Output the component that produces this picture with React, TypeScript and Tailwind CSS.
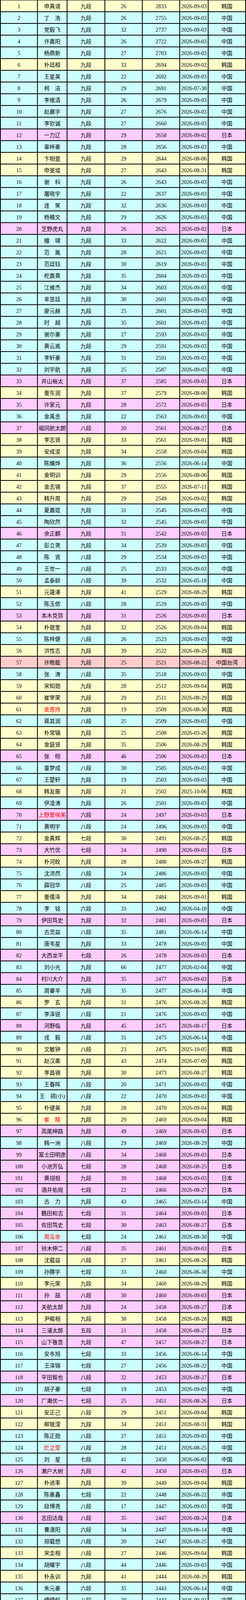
const RAW = `
1|申真谞|九段|26|2833|2026-09-03|韩国
2|丁　浩|九段|26|2755|2026-09-03|中国
3|党毅飞|九段|32|2737|2026-09-03|中国
4|许嘉阳|九段|26|2722|2026-09-03|中国
5|杨鼎新|九段|27|2703|2026-09-03|中国
6|朴廷桓|九段|33|2694|2026-09-02|韩国
7|王星昊|九段|22|2692|2026-09-03|中国
8|柯　洁|九段|29|2691|2026-07-30|中国
9|李维清|九段|26|2679|2026-09-03|中国
10|赵晨宇|九段|27|2676|2026-09-03|中国
11|李钦诚|九段|27|2660|2026-09-03|中国
12|一力辽|九段|29|2658|2026-09-02|日本
13|辜梓豪|九段|28|2656|2026-09-03|中国
14|卞相壹|九段|29|2644|2026-08-06|韩国
15|申旻埈|九段|27|2643|2026-08-31|韩国
16|谢　科|九段|26|2643|2026-09-03|中国
17|屠晓宇|九段|22|2637|2026-09-03|中国
18|连　笑|九段|32|2636|2026-09-03|中国
19|杨楷文|九段|29|2626|2026-09-03|中国
20|芝野虎丸|九段|26|2625|2026-09-02|日本
21|檀　啸|九段|33|2622|2026-09-03|中国
22|范　胤|九段|28|2621|2026-09-03|中国
23|范廷钰|九段|30|2619|2026-09-03|中国
24|柁嘉熹|九段|35|2604|2026-09-03|中国
25|江维杰|九段|34|2603|2026-09-03|中国
26|芈昱廷|九段|30|2601|2026-09-03|中国
27|廖元赫|九段|25|2601|2026-09-03|中国
28|时　越|九段|35|2601|2026-09-03|中国
29|谢尔豪|九段|27|2593|2026-09-03|中国
30|黄云嵩|九段|29|2591|2026-09-03|中国
31|李轩豪|九段|31|2591|2026-09-03|中国
32|刘宇航|九段|25|2587|2026-09-03|中国
33|井山裕太|九段|37|2585|2026-09-03|日本
34|姜东润|九段|37|2579|2026-08-06|韩国
35|许家元|九段|28|2572|2026-09-03|日本
36|金禹丞|九段|22|2563|2026-09-03|中国
37|福冈航太朗|八段|20|2561|2026-08-27|日本
38|李志贤|九段|33|2561|2026-09-01|韩国
39|安成浚|九段|34|2558|2026-09-04|韩国
40|陈耀烨|九段|36|2556|2026-06-14|中国
41|金明训|九段|29|2556|2026-08-06|韩国
42|金志锡|九段|37|2555|2026-07-11|韩国
43|韩升周|九段|29|2549|2026-09-02|韩国
44|夏晨琨|九段|31|2545|2026-09-03|中国
45|陶欣然|九段|32|2545|2026-09-03|中国
46|余正麒|九段|31|2542|2026-09-03|日本
47|彭立尧|九段|34|2539|2026-09-03|中国
48|陈　贤|八段|29|2534|2026-09-03|中国
49|王世一|八段|25|2533|2026-09-03|中国
50|孟泰龄|八段|39|2532|2026-05-18|中国
51|元晟溱|九段|41|2529|2026-08-29|韩国
52|陈玉侬|八段|28|2529|2026-09-03|中国
53|本木克弥|九段|31|2526|2026-09-03|日本
54|朴珉奎|九段|32|2526|2026-09-04|韩国
55|陈梓健|八段|26|2523|2026-09-03|中国
56|洪性志|九段|39|2522|2026-08-29|韩国
57|许皓鋐|九段|25|2521|2026-08-22|中国台湾
58|张　涛|八段|35|2518|2026-09-03|中国
59|宋知勋|九段|28|2512|2026-09-04|韩国
60|崔宰荣|九段|29|2511|2026-08-29|韩国
61|*金恩持|九段|19|2509|2026-08-30|韩国
62|蒋其润|八段|25|2509|2026-09-03|中国
63|朴常镇|九段|25|2508|2026-03-26|韩国
64|金庭贤|九段|35|2506|2026-08-29|韩国
65|张　栩|九段|46|2506|2026-09-03|日本
66|童梦成|八段|30|2505|2026-09-03|中国
67|王楚轩|九段|19|2503|2026-09-03|中国
68|韩友赈|九段|21|2502|2025-10-06|韩国
69|伊凌涛|九段|26|2501|2026-09-03|中国
70|*上野爱咲美|六段|24|2497|2026-09-03|日本
71|黄明宇|八段|24|2496|2026-09-03|中国
72|金真辉|七段|30|2491|2026-08-25|韩国
73|大竹优|七段|24|2490|2026-09-03|日本
74|朴河旼|九段|28|2488|2026-08-27|韩国
75|沈沛然|八段|24|2486|2026-09-03|中国
76|薛冠华|八段|25|2485|2026-09-03|中国
77|姜儒泽|九段|34|2484|2026-09-01|韩国
78|李　铭|六段|33|2482|2026-04-10|中国
79|伊田笃史|九段|32|2481|2026-09-03|日本
80|古灵益|八段|35|2481|2026-06-14|中国
81|唐韦星|九段|33|2478|2026-09-03|中国
82|大西龙平|七段|26|2478|2026-09-03|日本
83|刘小光|九段|66|2477|2026-02-04|中国
84|村川大介|九段|35|2477|2026-09-03|日本
85|周睿羊|九段|35|2477|2026-06-14|中国
86|罗　玄|九段|31|2476|2026-08-26|韩国
87|李泽锐|八段|21|2476|2026-09-03|中国
88|河野临|九段|45|2475|2026-08-17|日本
89|戎　毅|八段|31|2475|2026-06-14|中国
90|文敏钟|八段|23|2475|2025-10-05|韩国
91|赵汉乘|九段|43|2474|2026-07-09|韩国
92|李昌锡|九段|30|2473|2026-08-27|韩国
93|王春晖|八段|20|2471|2026-09-03|中国
94|王　硕(小)|八段|22|2470|2026-09-03|中国
95|朴键昊|九段|28|2470|2026-09-04|韩国
96|*崔　精|九段|29|2469|2026-09-04|韩国
97|高尾绅路|九段|49|2469|2026-09-03|日本
98|韩一洲|八段|29|2469|2026-08-29|中国
99|富士田明彦|八段|34|2468|2026-09-03|日本
100|小池芳弘|七段|28|2468|2026-08-25|日本
101|黄翊祖|九段|39|2468|2026-09-03|日本
102|酒井佑规|七段|22|2466|2026-08-27|日本
103|古　力|九段|43|2465|2026-03-14|中国
104|鶴田和志|七段|31|2464|2026-09-03|日本
105|佐田笃史|七段|30|2463|2026-08-27|日本
106|*周泓余|七段|24|2461|2026-08-30|中国
107|铃木伸二|八段|35|2461|2026-09-03|日本
108|沈载益|八段|27|2461|2026-08-26|韩国
109|孙腾宇|七段|33|2460|2026-06-30|中国
110|李元荣|九段|34|2460|2026-08-29|韩国
111|孙　喆|八段|30|2460|2026-09-03|日本
112|关航太郎|九段|24|2458|2026-08-27|日本
113|尹畯相|九段|38|2458|2026-08-28|韩国
114|三浦太郎|五段|21|2458|2026-08-27|日本
115|山下敬吾|九段|47|2457|2026-08-27|日本
116|安冬旭|七段|33|2456|2026-06-14|中国
117|王泽锦|七段|27|2456|2026-08-22|中国
118|平田智也|八段|32|2453|2026-08-27|日本
119|胡子豪|七段|19|2453|2026-09-03|中国
120|广濑优一|七段|25|2451|2026-08-26|日本
121|安正己|八段|29|2451|2026-09-04|韩国
122|柳珉滢|九段|34|2451|2026-08-31|韩国
123|陈正勋|八段|27|2451|2026-09-03|中国
124|*於之莹|八段|28|2451|2026-08-25|中国
125|刘　星|七段|41|2450|2026-06-02|中国
126|濑户大树|九段|42|2450|2026-09-03|日本
127|朴进率|九段|39|2449|2026-09-04|韩国
128|陈豪鑫|七段|22|2448|2026-08-22|中国
129|段博尧|八段|17|2447|2026-09-03|中国
130|志田达哉|八段|35|2447|2026-08-24|日本
131|曹潇阳|六段|34|2447|2026-06-14|中国
132|郑载想|八段|20|2447|2026-08-25|中国
133|宋圭相|八段|27|2446|2026-09-04|韩国
134|胡耀宇|八段|44|2446|2026-09-03|中国
135|朴永训|九段|41|2444|2026-08-29|韩国
136|朱元豪|六段|35|2443|2026-06-14|中国
137|傅健恒|八段|20|2443|2026-09-03|中国
138|安国铉|九段|34|2443|2026-08-25|韩国
139|周贺玺|七段|33|2442|2026-04-12|中国
140|渡边宽大|四段|23|2441|2026-09-03|日本
141|钟文靖|六段|35|2441|2026-04-09|中国
142|村本涉|五段|28|2439|2026-08-24|日本
143|邱禹然|七段|17|2438|2026-08-22|中国
144|白洪淅|九段|40|2437|2026-07-28|韩国
145|郑晳俊|六段|30|2437|2026-08-29|韩国
146|罗洗河|九段|48|2437|2025-10-25|中国
147|邬光亚|七段|36|2436|2026-08-29|中国
148|何　旸|八段|25|2436|2026-08-15|中国
149|叶长欣|八段|19|2436|2026-09-03|中国
150|横塚力|八段|31|2436|2026-09-03|日本
151|许荣珞|六段|30|2435|2026-08-29|韩国
152|谷口徹|六段|30|2435|2026-09-02|日本
153|俞　斌|九段|59|2433|2026-02-06|中国
154|*藤泽里菜|七段|27|2432|2026-09-03|日本
155|金昇珍|八段|20|2430|2026-09-04|韩国
156|田中康湧|五段|25|2430|2026-08-19|日本
157|六浦雄太|八段|27|2429|2026-09-03|日本
158|韩尚勋|九段|38|2428|2026-04-26|韩国
159|陈一纯|七段|24|2427|2026-09-03|中国
160|国宇征|六段|33|2427|2026-06-14|中国
161|林汉杰|八段|42|2426|2026-09-03|日本
162|汪希如|七段|28|2425|2026-08-27|中国
163|姜昇旼|九段|31|2423|2026-09-04|韩国
164|彦坂直人|九段|64|2422|2026-09-03|日本
165|陈　浩|六段|32|2421|2026-06-14|中国
166|李昊潼|八段|22|2420|2026-09-03|中国
167|马靖原|七段|17|2420|2026-08-30|中国
168|廖行文|六段|31|2419|2026-06-14|中国
169|严　欢|八段|35|2419|2026-06-14|中国
170|羽根直树|九段|50|2419|2026-09-03|日本
171|何语涵|七段|26|2419|2026-09-03|中国
172|蔡　竞|六段|33|2418|2026-04-27|中国
173|王昊洋|七段|36|2418|2026-05-09|中国
174|李成森|七段|26|2416|2026-09-03|中国
175|*陆敏全|七段|27|2413|2026-08-28|中国
176|辻笃仁|五段|24|2413|2026-09-02|日本
177|吴柏毅|六段|30|2413|2026-09-03|日本
178|结城聪|九段|54|2410|2026-09-03|日本
179|李宰成|六段|27|2409|2026-09-04|韩国
180|大桥成哉|八段|36|2409|2026-08-27|日本
181|马逸超|七段|28|2409|2026-08-28|中国
182|周子弈|六段|18|2408|2026-09-03|中国
183|洪爽義|五段|40|2408|2026-09-03|日本
184|阿部良希|五段|30|2408|2026-08-26|日本
185|胡钰函|六段|29|2405|2026-06-30|中国
186|张　强|七段|34|2405|2026-08-28|中国
187|高嶋湧吾|五段|29|2405|2026-07-29|日本
188|赵治勋|九段|70|2403|2026-08-17|日本
189|许一笛|七段|19|2402|2026-09-03|中国
190|清成哲也|九段|64|2401|2026-09-02|日本
191|黄静远|六段|26|2401|2026-06-14|中国
192|萧钰洋|四段|19|2401|2026-08-25|日本
193|许映皓|九段|40|2401|2026-08-28|韩国
194|王　硕|六段|32|2397|2026-06-14|中国
195|柳琪峰|六段|27|2397|2026-08-26|中国
196|郭闻潮|五段|37|2397|2026-08-30|中国
197|外柳是闻|五段|31|2397|2026-08-31|日本
198|三户秀平|四段|20|2397|2026-08-25|日本
199|桑原树|七段|17|2397|2026-08-27|日本
200|*吴依铭|七段|19|2395|2026-08-25|中国
201|朴炫洙|七段|26|2395|2026-08-28|韩国
202|大川拓也|四段|24|2395|2026-08-27|日本
203|今分太郎|五段|26|2395|2026-09-03|日本
204|韩墨阳|七段|18|2395|2026-08-26|中国
205|韩态熙|九段|32|2395|2026-09-04|韩国
206|洪茂镇|七段|32|2395|2026-09-04|韩国
`;

type Player = {
  rank: string;
  name: string;
  dan: string;
  age: string;
  rating: string;
  date: string;
  country: string;
  red: boolean;
};

const players: Player[] = RAW.trim()
  .split('\n')
  .map((line) => {
    const [rank, n, dan, age, rating, date, country] = line.split('|');
    const red = n.startsWith('*');
    return { rank, name: red ? n.slice(1) : n, dan, age, rating, date, country, red };
  });

const rowBg: Record<string, string> = {
  韩国: 'bg-[#ffffcc]',
  中国: 'bg-[#ccffff]',
  日本: 'bg-[#ffccff]',
  中国台湾: 'bg-[#ffcccc]',
};

function Cell({ children, className = '' }: { children: React.ReactNode; className?: string }) {
  return (
    <div className={`flex items-center justify-center whitespace-nowrap border-r-2 border-black pt-[3px] ${className}`}>
      {children}
    </div>
  );
}

function WeiboMark() {
  return (
    <svg viewBox="0 0 24 20" className="h-[16px] w-[20px]" fill="none">
      <ellipse cx="10" cy="12" rx="8.5" ry="6" stroke="#ffffff" strokeWidth="1.6" />
      <ellipse cx="9.5" cy="12.5" rx="3.6" ry="2.8" stroke="#ffffff" strokeWidth="1.4" />
      <circle cx="9" cy="13" r="1" fill="#ffffff" />
      <path d="M16 3.5a5 5 0 0 1 5.5 5.5" stroke="#ffffff" strokeWidth="1.5" strokeLinecap="round" />
      <path d="M16 6.2a2.4 2.4 0 0 1 2.8 2.8" stroke="#ffffff" strokeWidth="1.4" strokeLinecap="round" />
    </svg>
  );
}

export default function App() {
  return (
    <div className="relative w-[631px] border-l-2 border-t border-black bg-white font-['Liberation_Serif','Noto_Sans_CJK_SC',serif] text-[14px] leading-none text-black">
      {players.map((p) => (
        <div
          key={p.rank}
          className={`grid h-[30px] grid-cols-[95px_76px_97px_96px_96px_73px_96px] border-b-2 border-black ${rowBg[p.country]}`}
        >
          <Cell>{p.rank}</Cell>
          <Cell className={p.red ? 'text-[#ff0000]' : ''}>{p.name}</Cell>
          <Cell>{p.dan}</Cell>
          <Cell>{p.age}</Cell>
          <Cell>{p.rating}</Cell>
          <Cell>{p.date}</Cell>
          <Cell>{p.country}</Cell>
        </div>
      ))}

      {/* watermark */}
      <div className="absolute bottom-[4px] right-[6px] flex items-center gap-[3px] opacity-90 [text-shadow:0_0_2px_rgba(0,0,0,0.45)]">
        <WeiboMark />
        <span className="font-['Noto_Sans_CJK_SC',sans-serif] text-[14px] text-white">@纵横自由_</span>
      </div>
    </div>
  );
}
